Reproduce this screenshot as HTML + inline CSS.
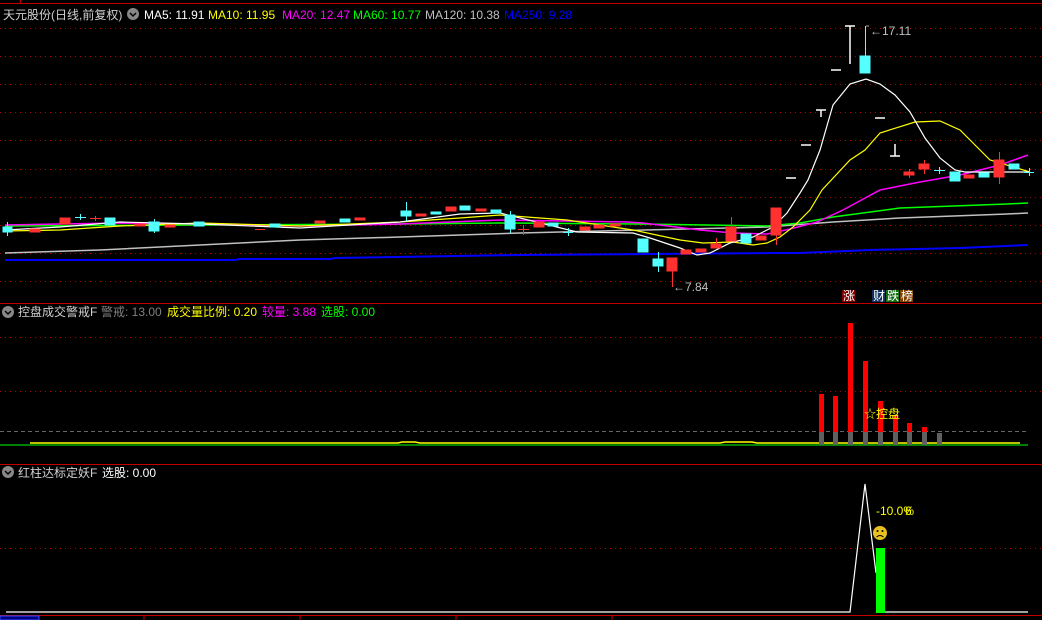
<!DOCTYPE html>
<html><head><meta charset="utf-8"><style>
html,body{margin:0;padding:0;background:#000;width:1042px;height:620px;overflow:hidden}
svg{display:block}
text{font-family:"Liberation Sans","Noto Sans CJK SC",sans-serif;font-size:12px}
</style></head><body>
<svg width="1042" height="620" viewBox="0 0 1042 620" xmlns="http://www.w3.org/2000/svg">
<rect width="1042" height="620" fill="#000"/>
<line x1="0" y1="3.5" x2="1042" y2="3.5" stroke="#c00000"/>
<line x1="20.5" y1="0" x2="20.5" y2="3" stroke="#c00000"/>
<line x1="0" y1="303.5" x2="1042" y2="303.5" stroke="#c00000"/>
<line x1="0" y1="464.5" x2="1042" y2="464.5" stroke="#c00000"/>
<line x1="0" y1="615.5" x2="1042" y2="615.5" stroke="#c00000"/>
<rect x="0" y="616" width="39" height="4" fill="#000080" stroke="#3050ff" stroke-width="1"/>
<g stroke="#c00000"><line x1="144" y1="616" x2="144" y2="620"/><line x1="300" y1="616" x2="300" y2="620"/><line x1="456" y1="616" x2="456" y2="620"/><line x1="612" y1="616" x2="612" y2="620"/></g>
<g stroke="#b00000" stroke-dasharray="1,4">
<line x1="0" y1="28.5" x2="1042" y2="28.5"/><line x1="0" y1="56.5" x2="1042" y2="56.5"/>
<line x1="0" y1="84.5" x2="1042" y2="84.5"/><line x1="0" y1="112.5" x2="1042" y2="112.5"/>
<line x1="0" y1="140.5" x2="1042" y2="140.5"/><line x1="0" y1="169.5" x2="1042" y2="169.5"/>
<line x1="0" y1="197.5" x2="1042" y2="197.5"/><line x1="0" y1="225.5" x2="1042" y2="225.5"/>
<line x1="0" y1="253.5" x2="1042" y2="253.5"/><line x1="0" y1="281.5" x2="1042" y2="281.5"/>
<line x1="0" y1="337.5" x2="1042" y2="337.5"/><line x1="0" y1="391.5" x2="1042" y2="391.5"/>
<line x1="0" y1="548.5" x2="1042" y2="548.5"/>
</g>
<polyline fill="none" stroke="#0000ff" stroke-width="2" points="5,260 235,260 240,259 330,259 335,258 520,255 773,253 800,253 870,250 960,248 1028,245"/>
<polyline fill="none" stroke="#c0c0c0" stroke-width="1.5" points="5,253 100,250 200,245 300,240 400,237 520,233 767,227 833,222 900,218 1007,214 1028,213"/>
<polyline fill="none" stroke="#00ff00" stroke-width="1.5" points="5,226 200,225 400,224 500,223 640,224 767,226 800,223 833,217 900,208 1007,204 1028,203"/>
<polyline fill="none" stroke="#ff00ff" stroke-width="1.5" points="5,225 60,224 120,223 200,224 300,226 400,224 500,220 627,222 643,223 700,230 733,233 767,234 790,229 817,222 843,210 880,190 920,182 960,175 1000,165 1028,155"/>
<polyline fill="none" stroke="#ffff00" stroke-width="1.2" points="5,231 60,230 120,226 200,223 300,226 400,222 460,218 500,215 567,220 633,230 680,240 703,243 733,242 753,245 767,243 780,237 793,227 810,210 822,190 850,160 865,150 880,133 915,122 940,121 960,130 990,160 1030,172"/>
<polyline fill="none" stroke="#ffffff" stroke-width="1.2" points="5,230 60,227 120,222 200,224 300,228 400,222 460,214 500,213 577,232 633,233 650,238 680,248 697,255 710,253 730,243 753,237 773,227 787,213 800,193 808,180 820,150 833,105 850,84 866,79 880,84 895,95 910,112 925,138 940,158 955,170 965,172 1030,172"/>
<g fill="#54ffff" stroke="#54ffff">
<rect x="3" y="227" width="9" height="5"/><line x1="7.5" y1="222" x2="7.5" y2="236"/>
<line x1="75" y1="217.5" x2="86" y2="217.5"/><line x1="80.5" y1="214" x2="80.5" y2="220"/>
<rect x="105" y="218" width="10" height="7"/>
<rect x="149" y="222" width="10" height="9"/><line x1="154.5" y1="219" x2="154.5" y2="233"/>
<rect x="194" y="222" width="10" height="4"/>
<rect x="270" y="224" width="10" height="3"/>
<rect x="340" y="219" width="10" height="3"/>
<rect x="401" y="211" width="10" height="5"/><line x1="406.5" y1="202" x2="406.5" y2="221"/>
<rect x="431" y="212" width="10" height="2"/>
<rect x="460" y="206" width="10" height="4"/>
<rect x="491" y="210" width="10" height="3"/>
<rect x="505" y="215" width="10" height="14"/><line x1="510.5" y1="211" x2="510.5" y2="233"/>
<rect x="548" y="223" width="10" height="3"/>
<line x1="563" y1="232.5" x2="573" y2="232.5"/><line x1="568.5" y1="228" x2="568.5" y2="236"/>
<rect x="638" y="239" width="10" height="13"/>
<rect x="653" y="259" width="10" height="7"/><line x1="658.5" y1="252" x2="658.5" y2="272"/>
<rect x="741" y="234" width="10" height="9"/>
<rect x="860" y="56" width="10" height="17"/><line x1="865.5" y1="26" x2="865.5" y2="56"/>
<line x1="934" y1="170.5" x2="945" y2="170.5"/><line x1="939.5" y1="167" x2="939.5" y2="174"/>
<rect x="950" y="172" width="10" height="9"/>
<rect x="979" y="173" width="10" height="4"/>
<rect x="1009" y="164" width="10" height="5"/>
<line x1="1024" y1="172.5" x2="1034" y2="172.5"/><line x1="1029.5" y1="168" x2="1029.5" y2="176"/>
</g>
<g fill="#ff3030" stroke="#ff3030">
<rect x="30" y="229" width="10" height="3"/>
<rect x="60" y="218" width="10" height="6"/>
<line x1="90" y1="218.5" x2="101" y2="218.5"/><line x1="95.5" y1="216" x2="95.5" y2="221"/>
<rect x="135" y="224" width="10" height="2"/>
<rect x="165" y="225" width="10" height="2"/>
<line x1="255" y1="229.5" x2="265" y2="229.5"/>
<rect x="315" y="221" width="10" height="2"/>
<rect x="355" y="218" width="10" height="2"/>
<rect x="416" y="214" width="10" height="2"/>
<rect x="446" y="207" width="10" height="4"/>
<rect x="476" y="209" width="10" height="2"/>
<line x1="518" y1="229.5" x2="529" y2="229.5"/><line x1="523.5" y1="225" x2="523.5" y2="235"/>
<rect x="534" y="222" width="10" height="5"/>
<rect x="580" y="227" width="10" height="3"/>
<rect x="594" y="225" width="10" height="3"/>
<rect x="610" y="224" width="10" height="2"/>
<rect x="667" y="258" width="10" height="13"/><line x1="672.5" y1="258" x2="672.5" y2="287"/>
<rect x="681" y="250" width="10" height="4"/>
<rect x="696" y="249" width="10" height="3"/>
<rect x="711" y="244" width="10" height="4"/><line x1="716.5" y1="238" x2="716.5" y2="244"/>
<rect x="726" y="227" width="10" height="14"/><line x1="731.5" y1="217" x2="731.5" y2="227"/>
<rect x="756" y="236" width="10" height="4"/>
<rect x="771" y="208" width="10" height="27"/><line x1="776.5" y1="235" x2="776.5" y2="245"/>
<rect x="904" y="172" width="10" height="3"/><line x1="909.5" y1="169" x2="909.5" y2="178"/>
<rect x="919" y="164" width="10" height="5"/><line x1="924.5" y1="160" x2="924.5" y2="174"/>
<rect x="964" y="175" width="10" height="3"/>
<rect x="994" y="160" width="10" height="17"/><line x1="999.5" y1="152" x2="999.5" y2="184"/>
</g>
<g stroke="#fff" stroke-width="1.5" fill="none">
<line x1="786" y1="178" x2="796" y2="178"/><line x1="801" y1="145" x2="811" y2="145"/>
<line x1="816" y1="110" x2="826" y2="110"/><line x1="821" y1="110" x2="821" y2="117"/>
<line x1="831" y1="70" x2="841" y2="70"/>
<line x1="845" y1="26" x2="855" y2="26"/><line x1="850" y1="26" x2="850" y2="64"/>
<line x1="875" y1="118" x2="885" y2="118"/>
<line x1="890" y1="156" x2="900" y2="156"/><line x1="895" y1="144" x2="895" y2="156"/>
</g>
<line x1="866" y1="26" x2="869" y2="26" stroke="#aaa"/>
<text x="870" y="35" fill="#c0c0c0">←17.11</text>
<text x="673" y="291" fill="#c0c0c0">←7.84</text>
<rect x="842" y="290" width="13" height="12" fill="#800000"/><text x="843" y="300" fill="#fff" font-size="11">涨</text>
<rect x="872" y="290" width="13" height="12" fill="#103060"/><text x="873" y="300" fill="#fff" font-size="11">财</text>
<rect x="886" y="290" width="13" height="12" fill="#107010"/><text x="887" y="300" fill="#fff" font-size="11">跌</text>
<rect x="900" y="290" width="13" height="12" fill="#804000"/><text x="901" y="300" fill="#fff" font-size="11">榜</text>
<text x="3" y="19" fill="#d0d0d0">天元股份(日线,前复权)</text>
<circle cx="133" cy="14" r="6" fill="#888"/><path d="M130 13 L133 16 L136 13" stroke="#000" stroke-width="1.5" fill="none"/>
<text x="144" y="19" fill="#fff">MA5: 11.91</text>
<text x="208" y="19" fill="#ffff00">MA10: 11.95</text>
<text x="282" y="19" fill="#ff00ff">MA20: 12.47</text>
<text x="353" y="19" fill="#00ff00">MA60: 10.77</text>
<text x="425" y="19" fill="#c0c0c0">MA120: 10.38</text>
<text x="504" y="19" fill="#0000ff">MA250: 9.28</text>
<circle cx="8" cy="312" r="6" fill="#888"/><path d="M5 311 L8 314 L11 311" stroke="#000" stroke-width="1.5" fill="none"/>
<text x="18" y="316" fill="#d0d0d0">控盘成交警戒F</text>
<text x="101" y="316" fill="#808080">警戒: 13.00</text>
<text x="167" y="316" fill="#ffff00">成交量比例: 0.20</text>
<text x="262" y="316" fill="#ff00ff">较量: 3.88</text>
<text x="321" y="316" fill="#00ff00">选股: 0.00</text>
<line x1="0" y1="431.5" x2="1028" y2="431.5" stroke="#666" stroke-dasharray="4,3"/>
<polyline fill="none" stroke="#ffff00" stroke-width="1.5" points="30,443 398,443 402,442 415,442 420,443 548,443 580,443 720,443 725,442 752,442 757,443 830,443 1020,443"/>
<line x1="0" y1="445" x2="1028" y2="445" stroke="#00ff00" stroke-width="1"/>
<g fill="#ff0000">
<rect x="819" y="394" width="5" height="38"/><rect x="833" y="396" width="5" height="36"/>
<rect x="848" y="323" width="5" height="109"/><rect x="863" y="361" width="5" height="71"/>
<rect x="878" y="401" width="5" height="31"/><rect x="893" y="415" width="5" height="17"/>
<rect x="907" y="423" width="5" height="9"/><rect x="922" y="427" width="5" height="5"/>
</g>
<g fill="#606060">
<rect x="819" y="432" width="5" height="13"/><rect x="833" y="432" width="5" height="13"/>
<rect x="848" y="432" width="5" height="13"/><rect x="863" y="432" width="5" height="13"/>
<rect x="878" y="432" width="5" height="13"/><rect x="893" y="432" width="5" height="13"/>
<rect x="907" y="432" width="5" height="13"/><rect x="922" y="432" width="5" height="13"/>
<rect x="937" y="433" width="5" height="12"/>
</g>
<text x="864" y="418" fill="#ffff00" font-size="13">☆控盘</text>
<circle cx="8" cy="472" r="6" fill="#888"/><path d="M5 471 L8 474 L11 471" stroke="#000" stroke-width="1.5" fill="none"/>
<text x="18" y="477" fill="#d0d0d0">红柱达标定妖F</text>
<text x="102" y="477" fill="#fff">选股: 0.00</text>
<polyline fill="none" stroke="#fff" stroke-width="1.2" points="6,612 850,612 865,484 876,573"/>
<line x1="885" y1="612" x2="1028" y2="612" stroke="#fff" stroke-width="1.2"/>
<rect x="876" y="548" width="9" height="65" fill="#00ff00"/>
<text x="876" y="515" fill="#ffff00">-10.0%</text>
<text x="905" y="515" fill="#ffff00">6</text>
<circle cx="880" cy="533" r="7" fill="#e8c020"/>
<circle cx="877.5" cy="531" r="1" fill="#000"/><circle cx="882.5" cy="531" r="1" fill="#000"/>
<path d="M876.5 537 Q880 534 883.5 537" stroke="#000" fill="none"/>
</svg>
</body></html>
